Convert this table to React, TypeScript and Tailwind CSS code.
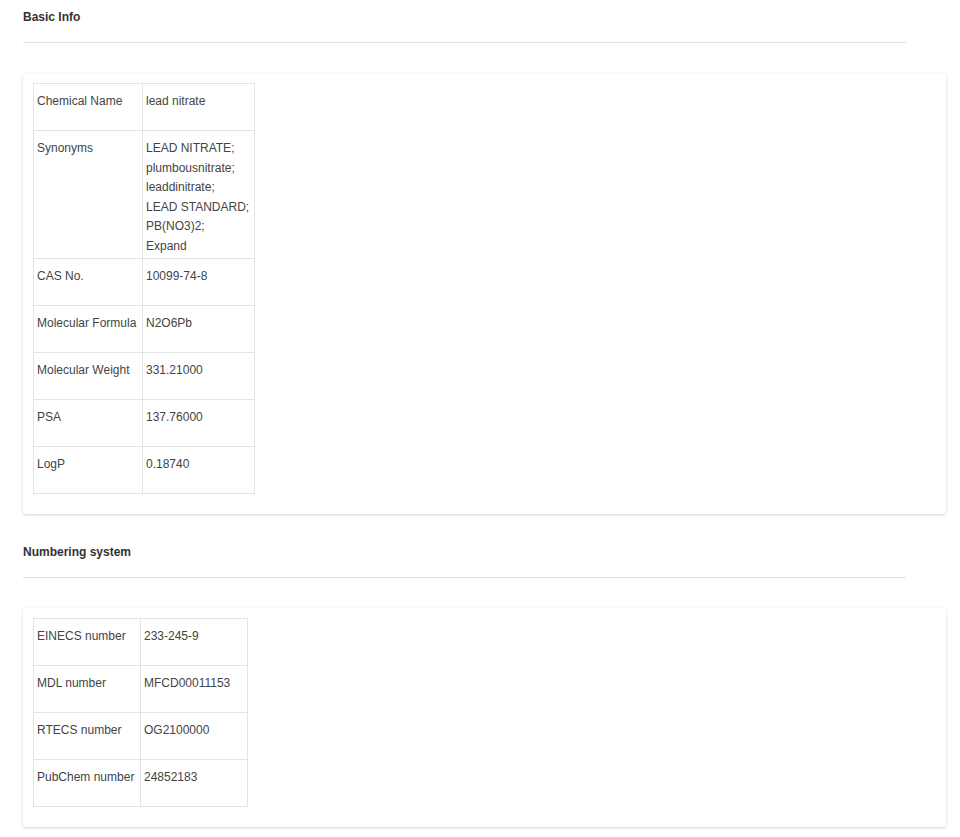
const basic: [string, string[]][] = [
  ["Chemical Name", ["lead nitrate"]],
  ["Synonyms", ["LEAD NITRATE;", "plumbousnitrate;", "leaddinitrate;", "LEAD STANDARD;", "PB(NO3)2;", "Expand"]],
  ["CAS No.", ["10099-74-8"]],
  ["Molecular Formula", ["N2O6Pb"]],
  ["Molecular Weight", ["331.21000"]],
  ["PSA", ["137.76000"]],
  ["LogP", ["0.18740"]],
];

const numbering: [string, string[]][] = [
  ["EINECS number", ["233-245-9"]],
  ["MDL number", ["MFCD00011153"]],
  ["RTECS number", ["OG2100000"]],
  ["PubChem number", ["24852183"]],
];

function InfoTable({ rows, w1, w2 }: { rows: [string, string[]][]; w1: string; w2: string }) {
  return (
    <table className="border-collapse text-[12px] leading-[19.5px] text-[#444]">
      <tbody>
        {rows.map(([label, vals]) => (
          <tr key={label}>
            <td className={`${w1} h-[47px] border border-[#e4e4e4] pl-[3px] pr-1 pt-[8px] pb-[2px] align-top whitespace-nowrap`}>{label}</td>
            <td className={`${w2} h-[47px] border border-[#e4e4e4] pl-[3px] pr-1 pt-[8px] pb-[2px] align-top whitespace-nowrap`}>
              {vals.map((v) => (
                <div key={v}>{v}</div>
              ))}
            </td>
          </tr>
        ))}
      </tbody>
    </table>
  );
}

function Section({ title, children, top }: { title: string; children: React.ReactNode; top: string }) {
  return (
    <section className={top}>
      <h2 className="text-[12px] leading-[20px] font-bold text-[#333]">{title}</h2>
      <div className="mt-[15px] h-px w-[883px] bg-[#e0e0e0]" />
      <div className="mt-[30px] w-[923px] rounded-[3px] bg-white pt-[10px] pb-[20px] pl-[10px] shadow-[0_1px_3px_rgba(0,0,0,0.18)]">
        {children}
      </div>
    </section>
  );
}

export default function App() {
  return (
    <div className="min-h-[837px] bg-white pl-[23px] font-['Liberation_Sans',Arial,sans-serif]">
      <Section title="Basic Info" top="pt-[7px]">
        <InfoTable rows={basic} w1="w-[109px]" w2="w-[112px]" />
      </Section>
      <Section title="Numbering system" top="pt-[28px]">
        <InfoTable rows={numbering} w1="w-[107px]" w2="w-[107px]" />
      </Section>
    </div>
  );
}
